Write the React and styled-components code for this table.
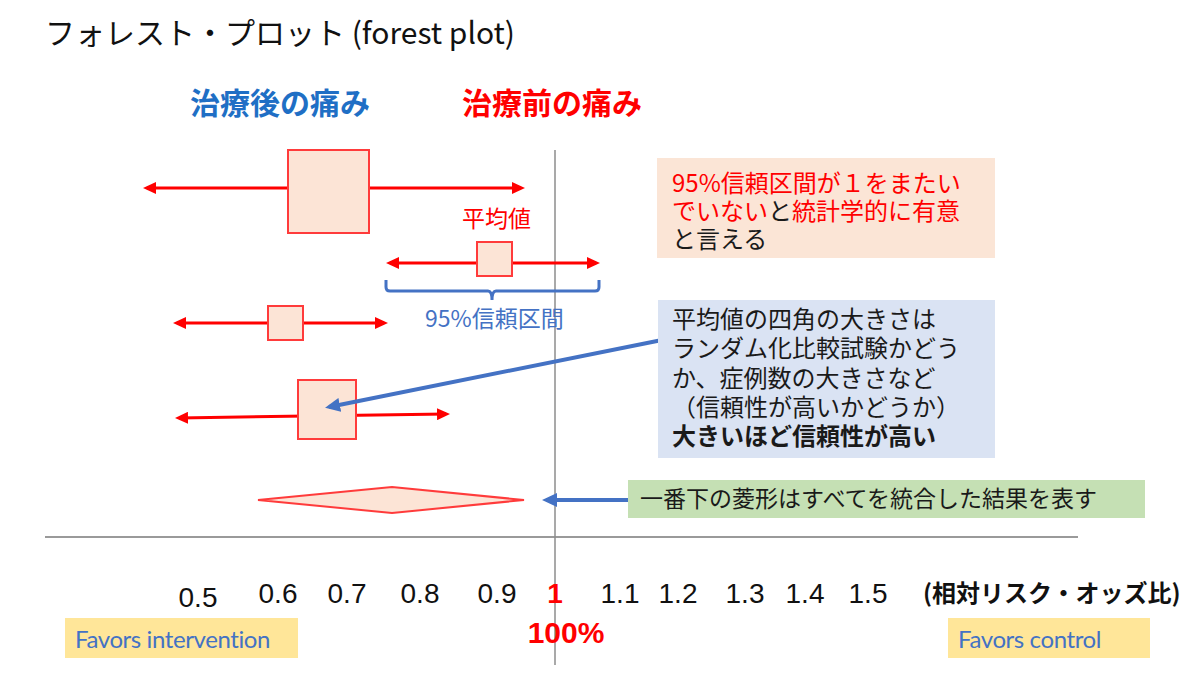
import React from 'react';
import styled, { createGlobalStyle } from 'styled-components';

const RED = '#ff0000';
const BLUE = '#4472c4';
const BOX_FILL = '#fce4d6';
const JP = '"Noto Sans CJK JP", "Noto Sans", sans-serif';

const GlobalStyle = createGlobalStyle`
  body {
    margin: 0;
    background: #fff;
    font-family: ${JP};
  }
`;

const Slide = styled.main`
  position: relative;
  width: 1200px;
  height: 687px;
  overflow: hidden;
  background: #fff;
`;

const Title = styled.h1`
  position: relative;
  z-index: 1;
  margin: 0;
  padding: 13px 0 0 45px;
  font: 400 30px/36px ${JP};
  color: #111;
`;

const Chart = styled.svg`
  position: absolute;
  left: 0;
  top: 0;
  width: 1200px;
  height: 687px;
`;

const Heading = styled.text`
  font-family: ${JP};
  font-size: 30px;
  font-weight: 700;
  fill: ${(p) => p.$color};
`;

const Note = styled.text`
  font-family: ${JP};
  font-size: ${(p) => p.$size}px;
  fill: ${(p) => p.$color};
`;

const Tick = styled.text`
  font-family: "Liberation Sans", Arial, sans-serif;
  font-size: ${(p) => p.$size || 28}px;
  font-weight: ${(p) => (p.$strong ? 700 : 400)};
  fill: ${(p) => (p.$strong ? RED : '#111')};
  text-anchor: middle;
`;

const AxisName = styled.text`
  font-family: ${JP};
  font-size: 24px;
  font-weight: 700;
  fill: #111;
`;

const Callout = styled.div`
  position: absolute;
  left: ${(p) => p.$x}px;
  top: ${(p) => p.$y}px;
  width: ${(p) => p.$w}px;
  height: ${(p) => p.$h}px;
  box-sizing: border-box;
  padding: ${(p) => p.$pad};
  background: ${(p) => p.$bg};
  font-family: ${JP};
  font-size: ${(p) => p.$size || 24}px;
  line-height: ${(p) => p.$lh || 28}px;
  color: #1a1a1a;
  white-space: nowrap;
`;

const Line = styled.div`
  font-weight: ${(p) => (p.$bold ? 700 : 400)};
`;

const Red = styled.span`
  color: ${RED};
`;

const Favor = styled.div`
  position: absolute;
  left: ${(p) => p.$x}px;
  top: 618px;
  width: ${(p) => p.$w}px;
  height: 40px;
  box-sizing: border-box;
  padding-left: 10px;
  background: #ffe699;
  display: flex;
  align-items: center;
  font-family: Lato, "Liberation Sans", sans-serif;
  font-size: 24px;
  letter-spacing: -0.4px;
  color: ${BLUE};
`;

const rows = [
  { x1: 143, y1: 188, x2: 525, y2: 188, box: [288, 150, 81, 83] },
  { x1: 386, y1: 263, x2: 600, y2: 263, box: [477, 242, 35, 34] },
  { x1: 173, y1: 323, x2: 388, y2: 323, box: [268, 306, 35, 34] },
  { x1: 175, y1: 418, x2: 450, y2: 414, box: [298, 380, 58, 59] },
];

const ticks = [
  { v: '0.5', x: 198, y: 607 },
  { v: '0.6', x: 278, y: 603 },
  { v: '0.7', x: 347, y: 603 },
  { v: '0.8', x: 420, y: 603 },
  { v: '0.9', x: 497, y: 603 },
  { v: '1', x: 555, y: 603, strong: true },
  { v: '1.1', x: 620, y: 603 },
  { v: '1.2', x: 678, y: 603 },
  { v: '1.3', x: 745, y: 603 },
  { v: '1.4', x: 805, y: 603 },
  { v: '1.5', x: 868, y: 603 },
];

// shorten a segment by d at both ends so the marker tips land on the endpoints
const trim = (r, d) => {
  const len = Math.hypot(r.x2 - r.x1, r.y2 - r.y1);
  const ux = (r.x2 - r.x1) / len;
  const uy = (r.y2 - r.y1) / len;
  return { x1: r.x1 + ux * d, y1: r.y1 + uy * d, x2: r.x2 - ux * d, y2: r.y2 - uy * d };
};

const App = () => (
  <>
    <GlobalStyle />
    <Slide>
      <Chart viewBox="0 0 1200 687">
        <defs>
          <marker id="red-head" viewBox="0 0 13 12" refX="9" refY="6"
            markerWidth="13" markerHeight="12" markerUnits="userSpaceOnUse"
            orient="auto-start-reverse">
            <path d="M0 0 L13 6 L0 12 Z" fill={RED} />
          </marker>
          <marker id="blue-head" viewBox="0 0 15 14" refX="11" refY="7"
            markerWidth="15" markerHeight="14" markerUnits="userSpaceOnUse"
            orient="auto">
            <path d="M0 0 L15 7 L0 14 Z" fill={BLUE} />
          </marker>
        </defs>

        <Heading x="190" y="114" $color="#1f6fc5">治療後の痛み</Heading>
        <Heading x="462" y="114" $color={RED}>治療前の痛み</Heading>

        <line x1="45" y1="537" x2="1078" y2="537" stroke="#9a9a9a" strokeWidth="2" />
        <line x1="555" y1="150" x2="555" y2="665" stroke="#8c8c8c" strokeWidth="1.5" />

        {rows.map((r) => {
          const s = trim(r, 4);
          return (
            <g key={r.x1}>
              <line x1={s.x1} y1={s.y1} x2={s.x2} y2={s.y2}
                stroke={RED} strokeWidth="3"
                markerStart="url(#red-head)" markerEnd="url(#red-head)" />
              <rect x={r.box[0]} y={r.box[1]} width={r.box[2]} height={r.box[3]}
                fill={BOX_FILL} stroke="#ff3b3b" strokeWidth="2" />
            </g>
          );
        })}

        <Note x="462" y="227" $size={23} $color={RED}>平均値</Note>

        <path d="M386 280 V287 Q386 291 390 291 H488 Q492 291 492 300 Q492 291 496 291 H595 Q599 291 599 287 V280"
          fill="none" stroke={BLUE} strokeWidth="3" />
        <Note x="425" y="327" $size={23} $color={BLUE}>95%信頼区間</Note>

        <polygon points="258,500 392,487 524,500 392,513"
          fill={BOX_FILL} stroke="#ff3b3b" strokeWidth="2" />

        <line x1="662" y1="340" x2="329" y2="407" stroke={BLUE} strokeWidth="4"
          markerEnd="url(#blue-head)" />
        <line x1="628" y1="500" x2="546" y2="500" stroke={BLUE} strokeWidth="4"
          markerEnd="url(#blue-head)" />

        {ticks.map((t) => (
          <Tick key={t.v} x={t.x} y={t.y} $strong={t.strong}>{t.v}</Tick>
        ))}
        <AxisName x="923" y="602">(相対リスク・オッズ比)</AxisName>
        <Tick x="566" y="643" $strong $size={30}>100%</Tick>
      </Chart>

      <Title>フォレスト・プロット (forest plot)</Title>

      <Callout $x={657} $y={158} $w={338} $h={100} $pad="10px 0 0 15px" $bg="#fbe5d6">
        <Line><Red>95%信頼区間が１をまたい</Red></Line>
        <Line><Red>でいない</Red>と<Red>統計学的に有意</Red></Line>
        <Line>と言える</Line>
      </Callout>

      <Callout $x={658} $y={300} $w={337} $h={158} $pad="3px 0 0 14px" $bg="#dae3f3" $lh={29.3}>
        <Line>平均値の四角の大きさは</Line>
        <Line>ランダム化比較試験かどう</Line>
        <Line>か、症例数の大きさなど</Line>
        <Line>（信頼性が高いかどうか）</Line>
        <Line $bold>大きいほど信頼性が高い</Line>
      </Callout>

      <Callout $x={628} $y={480} $w={517} $h={38} $pad="0 0 0 12px" $bg="#c5e0b4" $size={23} $lh={35}>
        一番下の菱形はすべてを統合した結果を表す
      </Callout>

      <Favor $x={65} $w={233}>Favors intervention</Favor>
      <Favor $x={948} $w={202}>Favors control</Favor>
    </Slide>
  </>
);

export default App;
